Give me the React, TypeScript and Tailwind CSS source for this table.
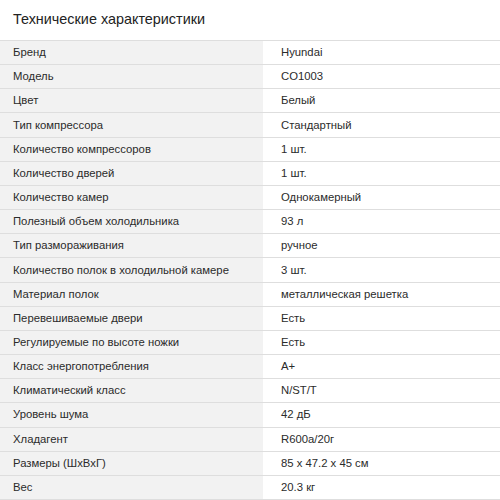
const SPECS: [string, string][] = [
  ["Бренд", "Hyundai"],
  ["Модель", "CO1003"],
  ["Цвет", "Белый"],
  ["Тип компрессора", "Стандартный"],
  ["Количество компрессоров", "1 шт."],
  ["Количество дверей", "1 шт."],
  ["Количество камер", "Однокамерный"],
  ["Полезный объем холодильника", "93 л"],
  ["Тип размораживания", "ручное"],
  ["Количество полок в холодильной камере", "3 шт."],
  ["Материал полок", "металлическая решетка"],
  ["Перевешиваемые двери", "Есть"],
  ["Регулируемые по высоте ножки", "Есть"],
  ["Класс энергопотребления", "A+"],
  ["Климатический класс", "N/ST/T"],
  ["Уровень шума", "42 дБ"],
  ["Хладагент", "R600a/20г"],
  ["Размеры (ШхВхГ)", "85 x 47.2 x 45 см"],
  ["Вес", "20.3 кг"],
];

export default function App() {
  return (
    <div className="w-[500px] h-[500px] overflow-hidden bg-white font-[family-name:'Liberation_Sans',Arial,sans-serif] text-[#222]">
      <div className="h-[40px] flex items-center px-[13px] text-[14.4px]">
        Технические характеристики
      </div>
      <div className="border-b border-[#dedede]">
        {SPECS.map(([k, v]) => (
          <div key={k} className="flex h-[24.16px] border-t border-[#dedede] text-[11.3px] text-[#2b2b2b]">
            <div className="w-[263px] bg-[#f2f2f2] flex items-center pl-[13px]">{k}</div>
            <div className="flex-1 flex items-center pl-[18px]">{v}</div>
          </div>
        ))}
      </div>
    </div>
  );
}
